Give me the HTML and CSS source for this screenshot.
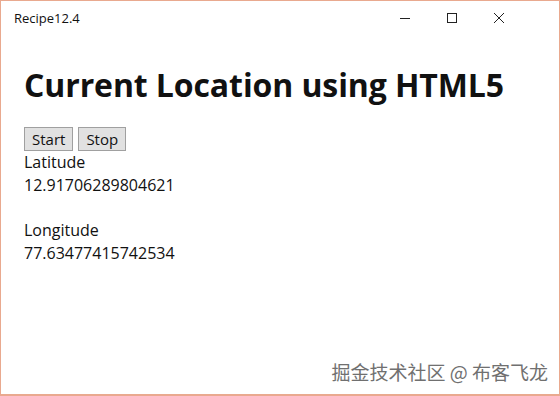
FILE: index.html
```html
<!DOCTYPE html>
<html lang="en">
<head>
    <meta charset="UTF-8">
    <title>Recipe12.4</title>
    <link rel="stylesheet" href="styles.css">
</head>
<body>
    <div class="window">
        <div class="titlebar">
            <span class="app-title">Recipe12.4</span>
            <div class="controls">
                <span class="ctl">
                    <svg width="12" height="12" viewBox="0 0 12 12"><path d="M1 6.5h10" stroke="#222" stroke-width="1"/></svg>
                </span>
                <span class="ctl">
                    <svg width="12" height="12" viewBox="0 0 12 12"><rect x="1.5" y="1.5" width="9" height="9" fill="none" stroke="#222" stroke-width="1"/></svg>
                </span>
                <span class="ctl">
                    <svg width="12" height="12" viewBox="0 0 12 12"><path d="M1 1l10 10M11 1L1 11" stroke="#222" stroke-width="1"/></svg>
                </span>
            </div>
        </div>

        <div class="content">
            <h1>Current Location using HTML5</h1>
            <div class="buttons">
                <button>Start</button>
                <button>Stop</button>
            </div>
            <div class="coords">
                <p>Latitude<br>12.91706289804621</p>
                <p>Longitude<br>77.63477415742534</p>
            </div>
        </div>

        <div class="watermark">掘金技术社区 @ 布客飞龙</div>
    </div>
</body>
</html>
```

FILE: styles.css
```css
html, body {
    margin: 0;
    padding: 0;
    background: #fff;
}
body {
    font-family: "Open Sans", "Noto Sans", sans-serif;
    color: #111;
}
.window {
    box-sizing: border-box;
    width: 560px;
    height: 396px;
    border: 1px solid #e9a98f;
    border-bottom-width: 2px;
    display: flex;
    flex-direction: column;
}
.titlebar {
    height: 34px;
    display: flex;
    align-items: center;
    justify-content: space-between;
}
.app-title {
    font-size: 13px;
    padding-left: 13px;
    color: #111;
}
.controls {
    display: flex;
    padding-right: 37px;
}
.ctl {
    width: 47px;
    display: flex;
    justify-content: center;
}
.content {
    padding: 0 23px;
    flex: 1;
}
h1 {
    font-size: 32px;
    font-weight: bold;
    margin: 30px 0 22px;
    line-height: 40px;
    letter-spacing: -0.1px;
}
.buttons {
    display: flex;
    gap: 5px;
}
button {
    font-family: "Open Sans", sans-serif;
    font-size: 15px;
    height: 24px;
    padding: 0 7px;
    background: #e1e1e1;
    border: 1px solid #a0a0a0;
    color: #111;
}
.coords p {
    margin: 0 0 22px;
    font-size: 16px;
    line-height: 23px;
}
.watermark {
    font-family: "Noto Sans CJK SC", sans-serif;
    font-size: 19px;
    color: #707070;
    text-align: right;
    padding: 0 11px 9px 0;
}
```
